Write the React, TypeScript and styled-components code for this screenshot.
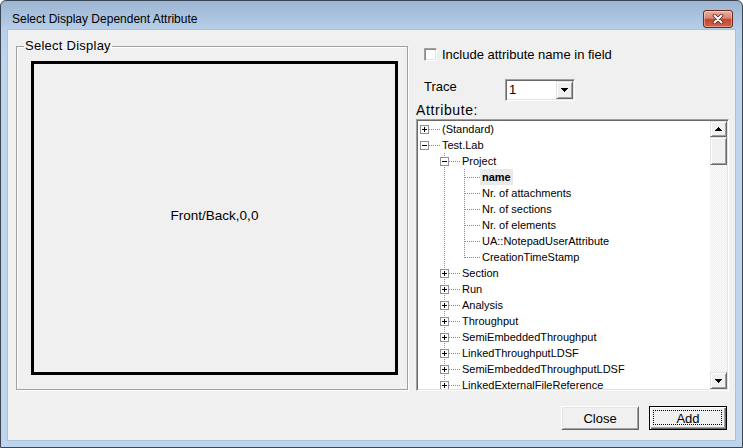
import React from 'react';
import styled, { createGlobalStyle } from 'styled-components';

const GlobalStyle = createGlobalStyle`
  html, body {
    margin: 0;
    padding: 0;
    background: #ffffff;
  }
  body {
    font-family: 'Liberation Sans', Arial, sans-serif;
    color: #000;
  }
  * {
    box-sizing: border-box;
  }
`;

const Window = styled.div`
  width: 743px;
  height: 448px;
  border: 1px solid #3b4654;
  border-radius: 6px 6px 0 0;
  background: linear-gradient(
    180deg,
    #9cb5d2 0px,
    #b7cfe8 29px,
    #bfd5ec 60px,
    #bfd5ec 100%
  );
  padding: 0 7px 7px;
  display: flex;
  flex-direction: column;
`;

const TitleBar = styled.div`
  height: 29px;
  padding: 6px 2px 0 4px;
  display: flex;
  align-items: center;
  justify-content: space-between;
`;

const TitleText = styled.div`
  font-size: 12px;
  color: #000;
`;

const CloseX = styled.div`
  width: 30px;
  height: 18px;
  border: 1px solid #6b2a1e;
  border-radius: 3px;
  background: linear-gradient(
    180deg,
    #eab1a3 0%,
    #d98470 45%,
    #c4462e 52%,
    #d2654a 100%
  );
  box-shadow: inset 0 0 0 1px rgba(255, 255, 255, 0.35);
  display: flex;
  align-items: center;
  justify-content: center;
`;

const Client = styled.div`
  flex: 1;
  background: #f0f0f0;
  box-shadow: 0 0 0 1px #a9c1dc;
  display: flex;
  flex-direction: column;
`;

const MainRow = styled.div`
  display: flex;
  align-items: flex-start;
  padding: 8px 0 0 8px;
`;

const Group = styled.fieldset`
  width: 392px;
  margin: 0;
  padding: 7px 9px 14px 14px;
  border: 1px solid #a0a0a0;
  box-shadow: inset 1px 1px 0 #fff, 1px 1px 0 #fff;
  min-width: 0;
`;

const GroupLegend = styled.legend`
  margin-left: -7px;
  padding: 0 1px;
  font-size: 13px;
  line-height: 16px;
  letter-spacing: 0.25px;
`;

const DisplayBox = styled.div`
  width: 367px;
  height: 314px;
  border: 3px solid #000;
  display: flex;
  align-items: center;
  justify-content: center;
  padding-bottom: 6px;
  font-size: 13.5px;
`;

const RightPane = styled.div`
  margin-left: 8px;
  width: 313px;
  display: flex;
  flex-direction: column;
`;

const CheckRow = styled.label`
  margin-top: 8px;
  height: 16px;
  padding-left: 8px;
  display: flex;
  align-items: center;
  gap: 5px;
  font-size: 13px;
`;

const CheckBox = styled.span`
  width: 13px;
  height: 13px;
  background: #fff;
  border: 1px solid;
  border-color: #a0a0a0 #fff #fff #a0a0a0;
  box-shadow: inset 1px 1px 0 #8a8a8a, inset -1px -1px 0 #e3e3e3;
`;

const TraceRow = styled.div`
  margin-top: 17px;
  padding-left: 8px;
  display: flex;
  align-items: flex-start;
`;

const TraceLabel = styled.div`
  width: 81px;
  font-size: 13px;
  line-height: 16px;
`;

const Combo = styled.div`
  width: 70px;
  height: 22px;
  background: #fff;
  border: 1px solid;
  border-color: #a0a0a0 #fff #fff #a0a0a0;
  box-shadow: inset 1px 1px 0 #696969, inset -1px -1px 0 #e3e3e3;
  padding: 1px;
  display: flex;
`;

const ComboValue = styled.div`
  flex: 1;
  padding-left: 2px;
  font-size: 13px;
  line-height: 18px;
`;

const RaisedButton = styled.div<{ $h: number }>`
  width: 17px;
  height: ${(p) => p.$h}px;
  flex: none;
  background: #f0f0f0;
  border: 1px solid;
  border-color: #e3e3e3 #696969 #696969 #e3e3e3;
  box-shadow: inset 1px 1px 0 #fff, inset -1px -1px 0 #a0a0a0;
  display: flex;
  align-items: center;
  justify-content: center;
`;

const FieldLabel = styled.div`
  margin-top: 1px;
  font-size: 14px;
  line-height: 16px;
  letter-spacing: 0.6px;
`;

const Tree = styled.div`
  margin-top: 1px;
  width: 313px;
  height: 272px;
  background: #fff;
  border: 1px solid;
  border-color: #a0a0a0 #fff #fff #a0a0a0;
  box-shadow: inset 1px 1px 0 #696969, inset -1px -1px 0 #e3e3e3;
  padding: 1px;
  display: flex;
`;

const TreeList = styled.div`
  flex: 1;
  overflow: hidden;
`;

const TreeRow = styled.div`
  height: 16px;
  display: flex;
  align-items: center;
  white-space: nowrap;
`;

const NodeLabel = styled.span<{ $selected?: boolean }>`
  font-size: 11px;
  line-height: 16px;
  height: 16px;
  padding: 0 2px;
  margin-left: -2px;
  font-weight: ${(p) => (p.$selected ? 700 : 400)};
  background: ${(p) => (p.$selected ? '#e9e9e9' : 'transparent')};
`;

const ScrollBar = styled.div`
  width: 17px;
  display: flex;
  flex-direction: column;
`;

const Thumb = styled.div`
  width: 17px;
  height: 28px;
  background: #f0f0f0;
  border: 1px solid;
  border-color: #e3e3e3 #696969 #696969 #e3e3e3;
  box-shadow: inset 1px 1px 0 #fff, inset -1px -1px 0 #a0a0a0;
`;

const Track = styled.div`
  flex: 1;
  background: repeating-conic-gradient(#ffffff 0 25%, #ebebeb 0 50%) 0 0 /
    2px 2px;
`;

const Footer = styled.div`
  display: flex;
  justify-content: flex-end;
  gap: 10px;
  padding: 15px 8px 0 0;
`;

const PushButton = styled.button<{ $default?: boolean }>`
  position: relative;
  width: 78px;
  height: 24px;
  padding: 0;
  font-family: 'Liberation Sans', Arial, sans-serif;
  font-size: 13px;
  color: #000;
  background: #f0f0f0;
  border: 1px solid;
  border-color: ${(p) =>
    p.$default ? '#000' : '#fff #696969 #696969 #fff'};
  box-shadow: ${(p) =>
    p.$default
      ? 'inset 1px 1px 0 #fff, inset -1px -1px 0 #696969, inset -2px -2px 0 #a0a0a0'
      : 'inset 1px 1px 0 #e3e3e3, inset -1px -1px 0 #a0a0a0'};

  &::after {
    content: '';
    display: ${(p) => (p.$default ? 'block' : 'none')};
    position: absolute;
    inset: 3px 4px 4px 3px;
    border: 1px dotted #000;
  }
`;

const ArrowUp = () => (
  <svg width="7" height="4" viewBox="0 0 7 4" shapeRendering="crispEdges">
    <path d="M3 0h1v1h-1z M2 1h3v1h-3z M1 2h5v1h-5z M0 3h7v1h-7z" fill="#000" />
  </svg>
);

const ArrowDown = () => (
  <svg width="7" height="4" viewBox="0 0 7 4" shapeRendering="crispEdges">
    <path d="M0 0h7v1h-7z M1 1h5v1h-5z M2 2h3v1h-3z M3 3h1v1h-1z" fill="#000" />
  </svg>
);

const CloseGlyph = () => (
  <svg width="12" height="10" viewBox="0 0 12 10">
    <path d="M2.5 1.5 L9.5 8.5 M9.5 1.5 L2.5 8.5" stroke="#5a2218" strokeWidth="3.6" strokeLinecap="round" />
    <path d="M2.5 1.5 L9.5 8.5 M9.5 1.5 L2.5 8.5" stroke="#fff" strokeWidth="2" strokeLinecap="round" />
  </svg>
);

type Toggle = 'plus' | 'minus' | undefined;
type Branch = 'none' | 'full' | 'last';

const LINE = '#8a8a8a';

const Guide = ({ on }: { on: boolean }) => (
  <svg width="20" height="16" shapeRendering="crispEdges">
    {on && <line x1="6.5" y1="0" x2="6.5" y2="16" stroke={LINE} strokeDasharray="1 1" />}
  </svg>
);

const Connector = ({ toggle, branch }: { toggle: Toggle; branch: Branch }) => (
  <svg width="24" height="16" shapeRendering="crispEdges">
    {branch !== 'none' && (
      <line
        x1="6.5"
        y1="0"
        x2="6.5"
        y2={branch === 'full' ? 16 : 9}
        stroke={LINE}
        strokeDasharray="1 1"
      />
    )}
    <line x1={toggle ? 11 : 7} y1="8.5" x2="22" y2="8.5" stroke={LINE} strokeDasharray="1 1" />
    {toggle && (
      <>
        <rect x="2.5" y="4.5" width="8" height="8" fill="#fff" stroke="#919191" />
        <line x1="4" y1="8.5" x2="9" y2="8.5" stroke="#000" />
        {toggle === 'plus' && <line x1="6.5" y1="6" x2="6.5" y2="11" stroke="#000" />}
      </>
    )}
  </svg>
);

type Node = {
  label: string;
  guides: boolean[];
  toggle?: Toggle;
  branch: Branch;
  selected?: boolean;
};

const level1 = (label: string, toggle: Toggle = 'plus'): Node => ({
  label,
  guides: [false],
  toggle,
  branch: 'full',
});

const level2 = (label: string, branch: Branch = 'full', selected = false): Node => ({
  label,
  guides: [false, true],
  branch,
  selected,
});

const nodes: Node[] = [
  { label: '(Standard)', guides: [], toggle: 'plus', branch: 'none' },
  { label: 'Test.Lab', guides: [], toggle: 'minus', branch: 'none' },
  level1('Project', 'minus'),
  level2('name', 'full', true),
  level2('Nr. of attachments'),
  level2('Nr. of sections'),
  level2('Nr. of elements'),
  level2('UA::NotepadUserAttribute'),
  level2('CreationTimeStamp', 'last'),
  level1('Section'),
  level1('Run'),
  level1('Analysis'),
  level1('Throughput'),
  level1('SemiEmbeddedThroughput'),
  level1('LinkedThroughputLDSF'),
  level1('SemiEmbeddedThroughputLDSF'),
  level1('LinkedExternalFileReference'),
];

export default function App() {
  return (
    <>
      <GlobalStyle />
      <Window>
        <TitleBar>
          <TitleText>Select Display Dependent Attribute</TitleText>
          <CloseX>
            <CloseGlyph />
          </CloseX>
        </TitleBar>

        <Client>
          <MainRow>
            <Group>
              <GroupLegend>Select Display</GroupLegend>
              <DisplayBox>Front/Back,0,0</DisplayBox>
            </Group>

            <RightPane>
              <CheckRow>
                <CheckBox />
                Include attribute name in field
              </CheckRow>

              <TraceRow>
                <TraceLabel>Trace</TraceLabel>
                <Combo>
                  <ComboValue>1</ComboValue>
                  <RaisedButton $h={18}>
                    <ArrowDown />
                  </RaisedButton>
                </Combo>
              </TraceRow>

              <FieldLabel>Attribute:</FieldLabel>
              <Tree>
                <TreeList>
                  {nodes.map((n, i) => (
                    <TreeRow key={i}>
                      {n.guides.map((g, k) => (
                        <Guide key={k} on={g} />
                      ))}
                      <Connector toggle={n.toggle} branch={n.branch} />
                      <NodeLabel $selected={n.selected}>{n.label}</NodeLabel>
                    </TreeRow>
                  ))}
                </TreeList>
                <ScrollBar>
                  <RaisedButton $h={16}>
                    <ArrowUp />
                  </RaisedButton>
                  <Thumb />
                  <Track />
                  <RaisedButton $h={17}>
                    <ArrowDown />
                  </RaisedButton>
                </ScrollBar>
              </Tree>
            </RightPane>
          </MainRow>

          <Footer>
            <PushButton>Close</PushButton>
            <PushButton $default>Add</PushButton>
          </Footer>
        </Client>
      </Window>
    </>
  );
}
